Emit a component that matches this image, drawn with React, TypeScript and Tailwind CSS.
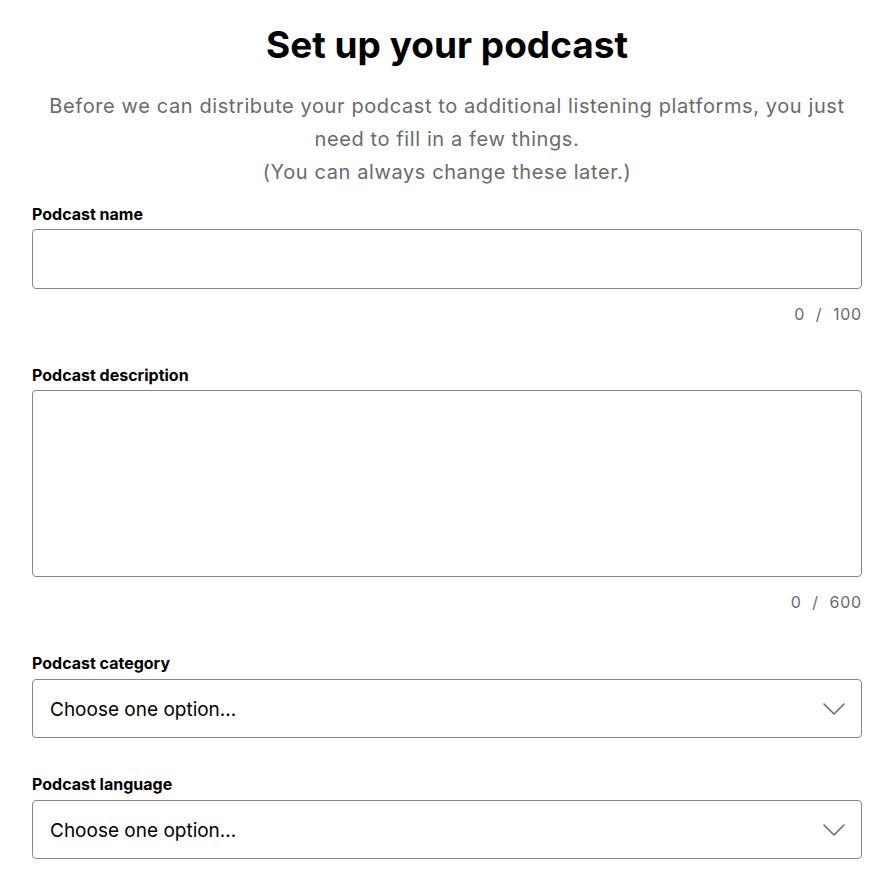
import { useState } from "react";

const NAME_MAX = 100;
const DESC_MAX = 600;

function Chevron() {
  return (
    <svg width="22" height="12" viewBox="0 0 22 12" fill="none" className="shrink-0">
      <path d="M1 1l10 10L21 1" stroke="#6a6a6a" strokeWidth="1.5" strokeLinecap="round" strokeLinejoin="round" />
    </svg>
  );
}

function Label({ children }: { children: React.ReactNode }) {
  return <label className="block text-[16px] leading-[20px] font-bold text-black mb-[5px]">{children}</label>;
}

function Counter({ value, max }: { value: number; max: number }) {
  return (
    <p className="mt-[13px] text-right text-[16px] leading-[24px] text-[#6a6a6a] tracking-wider">
      {value} &nbsp;/&nbsp; {max}
    </p>
  );
}

function SelectBox() {
  return (
    <button
      type="button"
      className="w-full h-[59px] flex items-center justify-between pl-[17px] pr-[16px] rounded-[4px] border border-[#878787] bg-white text-left"
    >
      <span className="text-[19px] leading-[28px] pt-[2px] text-black">Choose one option...</span>
      <Chevron />
    </button>
  );
}

export default function App() {
  const [name, setName] = useState("");
  const [desc, setDesc] = useState("");

  return (
    <div className="min-h-screen bg-white font-['Inter',sans-serif]">
      <div className="w-[830px] ml-8 pt-[23px]">
        <h1 className="text-center text-[37px] leading-[44px] font-bold text-black">Set up your podcast</h1>
        <p className="mt-[23px] text-center text-[20px] leading-[33px] text-[#6a6a6a] tracking-[0.6px] px-[6px]">
          Before we can distribute your podcast to additional listening platforms, you just need to fill in a few things.
          <br />
          (You can always change these later.)
        </p>

        {/* Name */}
        <div className="mt-[15px]">
          <Label>Podcast name</Label>
          <input
            value={name}
            maxLength={NAME_MAX}
            onChange={(e) => setName(e.target.value)}
            className="w-full h-[60px] rounded-[4px] border border-[#878787] px-4 text-[20px] outline-none"
          />
          <Counter value={name.length} max={NAME_MAX} />
        </div>

        {/* Description */}
        <div className="mt-[39px]">
          <Label>Podcast description</Label>
          <textarea
            value={desc}
            maxLength={DESC_MAX}
            onChange={(e) => setDesc(e.target.value)}
            className="block w-full h-[187px] rounded-[4px] border border-[#878787] p-4 text-[20px] outline-none resize-none"
          />
          <Counter value={desc.length} max={DESC_MAX} />
        </div>

        {/* Category */}
        <div className="mt-[39px]">
          <label className="block text-[16px] leading-[20px] font-bold text-black mb-[6px]">Podcast category</label>
          <SelectBox />
        </div>

        {/* Language */}
        <div className="mt-[36px]">
          <label className="block text-[16px] leading-[20px] font-bold text-black mb-[6px]">Podcast language</label>
          <SelectBox />
        </div>
      </div>
    </div>
  );
}
